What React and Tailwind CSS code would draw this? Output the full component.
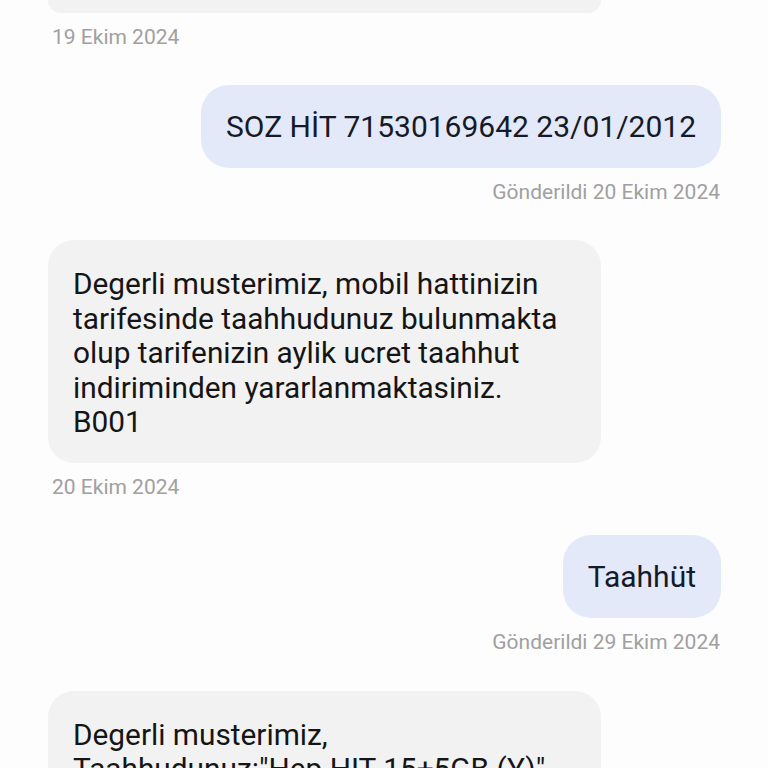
import React from "react";

const font = { fontFamily: "Roboto, 'Noto Sans', sans-serif" };

function Received({ children, className = "" }) {
  return (
    <div className={"ml-[48px] w-[553px] rounded-[26px] bg-[#f2f2f2] px-[25px] pt-[27px] pb-[23px] text-[29.8px] leading-[34.5px] text-[#151515] " + className}>
      {children}
    </div>
  );
}

function Sent({ children }) {
  return (
    <div className="flex justify-end pr-[47px]">
      <div className="rounded-[28px] bg-[#e3e9f9] px-[25px] py-[24px] text-[30px] leading-[35px] text-[#151a26]">
        {children}
      </div>
    </div>
  );
}

function DateRecv({ children }) {
  return (
    <div className="ml-[52px] mt-[13px] text-[21px] leading-[22px] text-[#a0a0a0]">{children}</div>
  );
}

function DateSent({ children }) {
  return (
    <div className="mt-[13px] pr-[48px] text-right text-[21px] leading-[22px] text-[#a0a0a0]">{children}</div>
  );
}

export default function App() {
  return (
    <div className="h-[768px] w-[768px] overflow-hidden bg-[#fdfdfd]" style={font}>
      <div className="ml-[48px] h-[13px] w-[553px] rounded-b-[26px] bg-[#f2f2f2]" />
      <DateRecv>19 Ekim 2024</DateRecv>
      <div className="mt-[37px]">
        <Sent>SOZ HİT 71530169642 23/01/2012</Sent>
        <DateSent>Gönderildi 20 Ekim 2024</DateSent>
      </div>
      <div className="mt-[37px]">
        <Received>
          Degerli musterimiz, mobil hattinizin tarifesinde taahhudunuz bulunmakta olup tarifenizin aylik ucret taahhut indiriminden yararlanmaktasiniz.
          <br />
          B001
        </Received>
        <DateRecv>20 Ekim 2024</DateRecv>
      </div>
      <div className="mt-[37px]">
        <Sent>Taahhüt</Sent>
        <DateSent>Gönderildi 29 Ekim 2024</DateSent>
      </div>
      <div className="mt-[38px]">
        <Received>
          Degerli musterimiz,
          <br />
          Taahhudunuz:"Hep HIT 15+5GB (Y)" tarifesinde taahhudunuz bulunmaktadir.
        </Received>
      </div>
    </div>
  );
}
